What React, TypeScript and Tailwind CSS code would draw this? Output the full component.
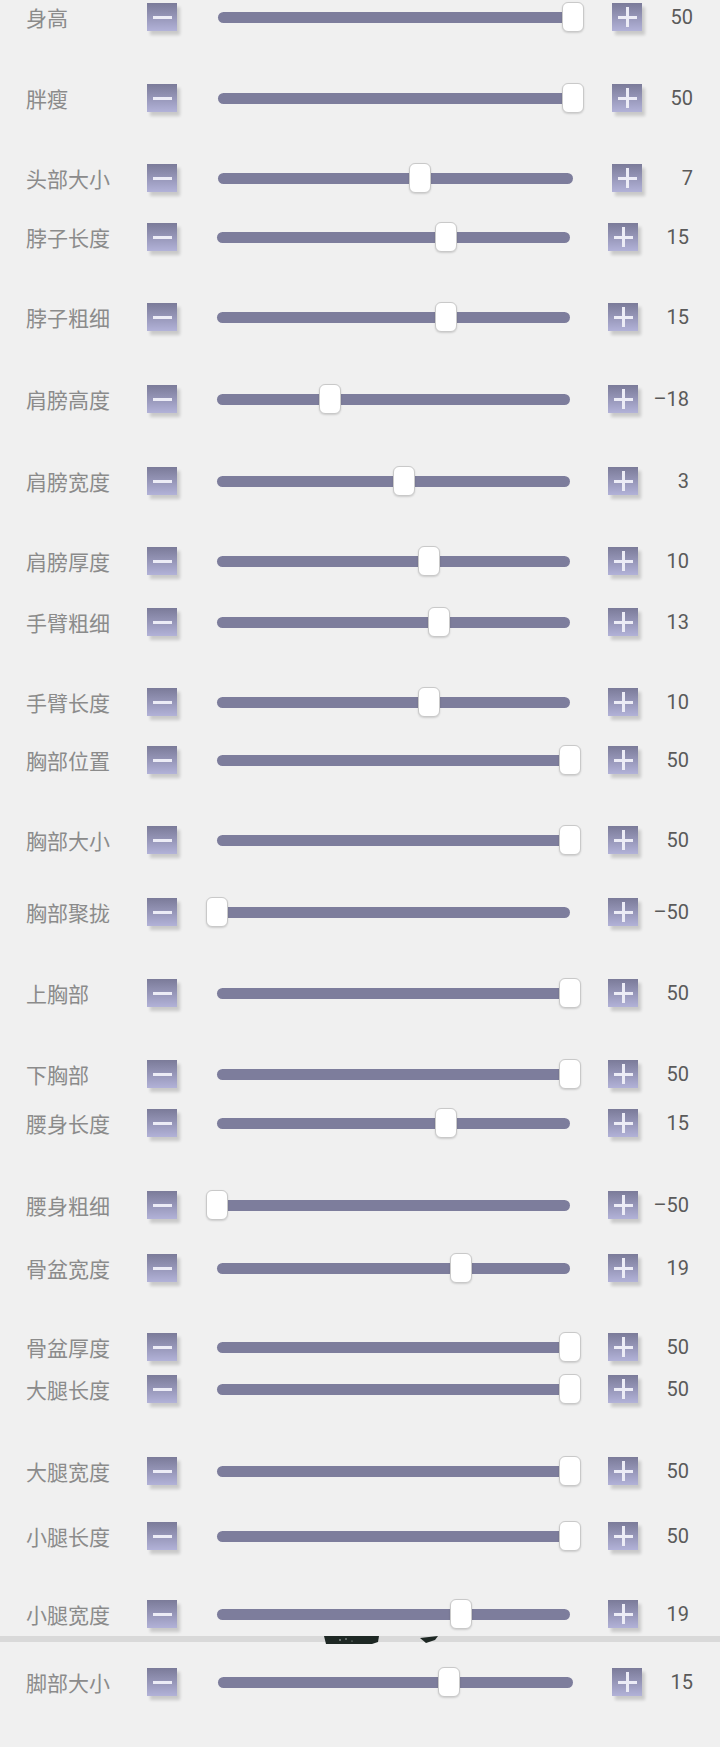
import React from "react";

type Row = {
  label: string;
  value: number;
  gap: string; // top margin of the row
  wide?: boolean;
};

const rows: Row[] = [
  { label: "身高", value: 50, gap: "mt-0", wide: true },
  { label: "胖瘦", value: 50, gap: "mt-[47px]", wide: true },
  { label: "头部大小", value: 7, gap: "mt-[46px]", wide: true },
  { label: "脖子长度", value: 15, gap: "mt-[25px]" },
  { label: "脖子粗细", value: 15, gap: "mt-[46px]" },
  { label: "肩膀高度", value: -18, gap: "mt-[48px]" },
  { label: "肩膀宽度", value: 3, gap: "mt-[48px]" },
  { label: "肩膀厚度", value: 10, gap: "mt-[46px]" },
  { label: "手臂粗细", value: 13, gap: "mt-[27px]" },
  { label: "手臂长度", value: 10, gap: "mt-[46px]" },
  { label: "胸部位置", value: 50, gap: "mt-[24px]" },
  { label: "胸部大小", value: 50, gap: "mt-[46px]" },
  { label: "胸部聚拢", value: -50, gap: "mt-[38px]" },
  { label: "上胸部", value: 50, gap: "mt-[47px]" },
  { label: "下胸部", value: 50, gap: "mt-[47px]" },
  { label: "腰身长度", value: 15, gap: "mt-[15px]" },
  { label: "腰身粗细", value: -50, gap: "mt-[48px]" },
  { label: "骨盆宽度", value: 19, gap: "mt-[29px]" },
  { label: "骨盆厚度", value: 50, gap: "mt-[45px]" },
  { label: "大腿长度", value: 50, gap: "mt-[8px]" },
  { label: "大腿宽度", value: 50, gap: "mt-[48px]" },
  { label: "小腿长度", value: 50, gap: "mt-[31px]" },
  { label: "小腿宽度", value: 19, gap: "mt-[44px]" },
];

const footRow: Row = { label: "脚部大小", value: 15, gap: "mt-[23px]", wide: true };

function StepButton({ plus }: { plus?: boolean }) {
  return (
    <div className="relative flex h-[28px] w-[30px] shrink-0 items-center justify-center bg-gradient-to-b from-[#7b7b99] to-[#b2b2d8] shadow-[3px_4px_3px_rgba(0,0,0,0.16)]">
      <div className="h-[3px] w-[19px] bg-[#ececf6]" />
      {plus && <div className="absolute h-[20px] w-[3px] bg-[#ececf6]" />}
    </div>
  );
}

function SliderRow({ row }: { row: Row }) {
  const frac = (row.value + 50) / 100;
  const text = row.value < 0 ? `–${Math.abs(row.value)}` : `${row.value}`;
  return (
    <div className={`flex h-[34px] shrink-0 items-center pl-[26px] ${row.gap}`}>
      <div className="w-[121px] shrink-0 text-[21px] leading-none text-[#8b8b8b] [font-family:'Noto_Sans_CJK_SC',sans-serif]">
        {row.label}
      </div>
      <StepButton />
      <div
        className={
          row.wide
            ? "relative ml-[41px] h-[11px] w-[355px] shrink-0 rounded-full bg-[#7d7d9c]"
            : "relative ml-[40px] h-[11px] w-[353px] shrink-0 rounded-full bg-[#7d7d9c]"
        }
      >
        <div
          className="absolute top-1/2 h-[30px] w-[22px] -translate-x-1/2 -translate-y-1/2 rounded-[6px] border border-[#c9c9c9] bg-white shadow-[0_1px_2px_rgba(0,0,0,0.15)]"
          style={{ left: `${frac * 100}%` }}
        />
      </div>
      <div className={row.wide ? "ml-[39px]" : "ml-[38px]"}>
        <StepButton plus />
      </div>
      <div className="w-[51px] shrink-0 text-right text-[20px] leading-none text-[#5a5a5a] [font-family:Roboto,'Liberation_Sans',sans-serif]">
        {text}
      </div>
    </div>
  );
}

export default function App() {
  return (
    <div className="flex min-h-[1747px] w-[720px] flex-col overflow-hidden bg-[#f0f0f0]">
      {rows.map((r) => (
        <SliderRow key={r.label} row={r} />
      ))}
      {/* divider strip with a sliver of the figure peeking through */}
      <div className="relative mt-[5px] h-[6px] w-full shrink-0 bg-[#d9d9d9]">
        <svg className="absolute left-[322px] top-0" width="120" height="9" viewBox="0 0 120 9">
          <path d="M2 0 L57 0 L56 6 L50 8 L4 8 Z" fill="#1e2824" />
          <circle cx="18" cy="4" r="0.8" fill="#c8d0cc" />
          <circle cx="24" cy="3" r="0.7" fill="#c8d0cc" />
          <circle cx="30" cy="5" r="0.6" fill="#aab4ae" />
          <path d="M98 2 L116 0 L113 4 L104 7 Z" fill="#1e2824" />
        </svg>
      </div>
      <SliderRow row={footRow} />
    </div>
  );
}
